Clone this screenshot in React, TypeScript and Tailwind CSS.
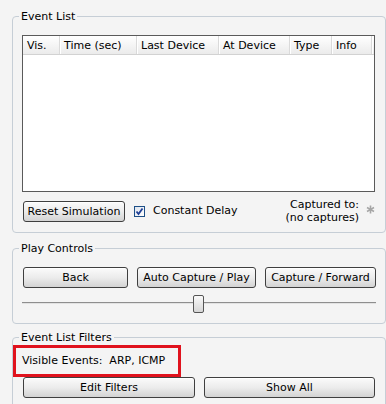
import React from 'react';

const cols = [
  { name: 'Vis.', w: 37 },
  { name: 'Time (sec)', w: 77 },
  { name: 'Last Device', w: 82 },
  { name: 'At Device', w: 71 },
  { name: 'Type', w: 42 },
  { name: 'Info', w: 40 },
];

function Btn({ children, className = '' }: { children: React.ReactNode; className?: string }) {
  return (
    <button
      className={`h-[21px] shrink-0 rounded-[3px] border border-[#3f3f3f] bg-linear-to-b from-[#fbfbfb] via-[#ececec] to-[#d3d3d3] text-[11px] leading-none text-black shadow-[inset_0_1px_0_#ffffff] ${className}`}
    >
      {children}
    </button>
  );
}

function Group({ title, className = '', children }: { title: string; className?: string; children: React.ReactNode }) {
  return (
    <fieldset className={`ml-3 w-[374px] rounded-[4px] border border-[#c6ced6] p-0 ${className}`}>
      <legend className="ml-[6px] px-[2px] leading-[13px]">{title}</legend>
      {children}
    </fieldset>
  );
}

export default function App() {
  return (
    <div className="h-[404px] w-[386px] overflow-hidden bg-[#f4f4f4] pt-[10px] font-['DejaVu_Sans',Verdana,sans-serif] text-[11px] text-black">
      {/* event list */}
      <Group title="Event List">
        <div className="pl-[9px] pt-[12px] pb-[8px]">
          <div className="h-[157px] w-[353px] border border-[#5a5a5a] bg-white">
            <div className="flex h-[19px] border-b border-[#d2d2d2] bg-linear-to-b from-white to-[#ebebeb]">
              {cols.map((c) => (
                <div
                  key={c.name}
                  className="flex items-center border-r border-[#dadada] pl-[4px] leading-none shadow-[1px_0_0_#ffffff]"
                  style={{ width: c.w }}
                >
                  {c.name}
                </div>
              ))}
            </div>
          </div>
          <div className="mt-[6px] flex h-[26px] items-center">
            <Btn className="ml-[1px] w-[102px]">Reset Simulation</Btn>
            <div className="ml-[9px] flex h-[11px] w-[11px] items-center justify-center border border-[#1d4f86] bg-linear-to-br from-[#dde4ee] to-white">
              <svg width="9" height="9" viewBox="0 0 9 9">
                <path d="M1.5 4.5 L3.5 7 L7.5 1.5" fill="none" stroke="#1f3f95" strokeWidth="1.8" />
              </svg>
            </div>
            <span className="ml-[8px]">Constant Delay</span>
            <div className="ml-auto text-right leading-[13px]">
              <div>Captured to:</div>
              <div>(no captures)</div>
            </div>
            <svg className="ml-[7px] mr-[10px] mb-[4px]" width="9" height="9" viewBox="0 0 9 9">
              <g stroke="#a6a6a6" strokeWidth="1.6">
                <line x1="4.5" y1="0.5" x2="4.5" y2="8.5" />
                <line x1="1" y1="2.5" x2="8" y2="6.5" />
                <line x1="1" y1="6.5" x2="8" y2="2.5" />
              </g>
            </svg>
          </div>
        </div>
      </Group>

      {/* play controls */}
      <Group title="Play Controls" className="mt-[9px]">
        <div className="pl-[10px] pt-[12px] pb-[10px]">
          <div className="flex gap-[9px]">
            <Btn className="w-[105px]">Back</Btn>
            <Btn className="w-[119px]">Auto Capture / Play</Btn>
            <Btn className="w-[111px]">Capture / Forward</Btn>
          </div>
          <div className="relative mt-[7px] h-[18px] w-[353px]">
            <div className="absolute left-[-1px] right-0 top-[7px] h-[1px] bg-[#8e8e8e]" />
            <div className="absolute left-[-1px] right-0 top-[8px] h-[1px] bg-[#e2e2e2]" />
            <div className="absolute left-[170px] top-0 h-[18px] w-[11px] rounded-[2px] border border-[#555] bg-linear-to-b from-[#fafafa] to-[#d6d6d6]" />
          </div>
        </div>
      </Group>

      {/* filters */}
      <Group title="Event List Filters" className="mt-[7px] h-[120px]">
        <div className="pt-[1px]">
          <div className="flex h-[32px] w-[168px] items-center border-[3px] border-[#e0121d] pl-[6px] whitespace-pre">
            {'Visible Events:  ARP, ICMP'}
          </div>
          <div className="flex gap-[9px] pl-[10px]">
            <Btn className="w-[172px]">Edit Filters</Btn>
            <Btn className="w-[171px]">Show All</Btn>
          </div>
        </div>
      </Group>
    </div>
  );
}
